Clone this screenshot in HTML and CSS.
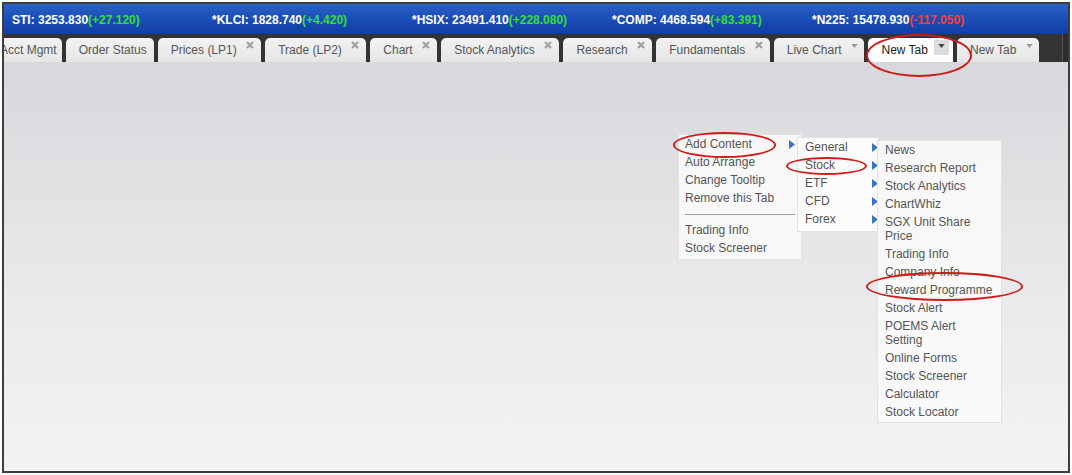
FILE: index.html
```html
<!DOCTYPE html>
<html>
<head>
<meta charset="utf-8">
<link rel="stylesheet" href="styles.css">
</head>
<body>
<div class="frame">
  <div class="ticker">
    <div class="tick">STI: 3253.830<span class="up">(+27.120)</span></div>
    <div class="tick">*KLCI: 1828.740<span class="up">(+4.420)</span></div>
    <div class="tick">*HSIX: 23491.410<span class="up">(+228.080)</span></div>
    <div class="tick">*COMP: 4468.594<span class="up">(+83.391)</span></div>
    <div class="tick">*N225: 15478.930<span class="down">(-117.050)</span></div>
  </div>
  <div class="tabbar">
    <div class="tabs">
      <div class="tab first">Acct Mgmt</div>
      <div class="tab">Order Status</div>
      <div class="tab">Prices (LP1)<svg class="x" viewBox="0 0 8 8"><path d="M1 1L7 7M7 1L1 7"/></svg></div>
      <div class="tab">Trade (LP2)<svg class="x" viewBox="0 0 8 8"><path d="M1 1L7 7M7 1L1 7"/></svg></div>
      <div class="tab">Chart<svg class="x" viewBox="0 0 8 8"><path d="M1 1L7 7M7 1L1 7"/></svg></div>
      <div class="tab">Stock Analytics<svg class="x" viewBox="0 0 8 8"><path d="M1 1L7 7M7 1L1 7"/></svg></div>
      <div class="tab">Research<svg class="x" viewBox="0 0 8 8"><path d="M1 1L7 7M7 1L1 7"/></svg></div>
      <div class="tab">Fundamentals<svg class="x" viewBox="0 0 8 8"><path d="M1 1L7 7M7 1L1 7"/></svg></div>
      <div class="tab drop">Live Chart<svg class="dd" viewBox="0 0 8 5"><path d="M0 0H8L4 5Z"/></svg></div>
      <div class="tab active">New Tab<span class="ddbtn"><svg class="dd" viewBox="0 0 8 5"><path d="M0 0H8L4 5Z"/></svg></span></div>
      <div class="tab drop">New Tab<svg class="dd" viewBox="0 0 8 5"><path d="M0 0H8L4 5Z"/></svg></div>
    </div>
    <div class="tabend"></div>
  </div>
  <div class="content">
    <div class="menu m1">
      <div class="item">Add Content<svg class="arr" viewBox="0 0 6 9"><path d="M0 0L6 4.5L0 9Z"/></svg></div>
      <div class="item">Auto Arrange</div>
      <div class="item">Change Tooltip</div>
      <div class="item">Remove this Tab</div>
      <div class="sep"></div>
      <div class="item">Trading Info</div>
      <div class="item">Stock Screener</div>
    </div>
    <div class="menu m2">
      <div class="item">General<svg class="arr" viewBox="0 0 6 9"><path d="M0 0L6 4.5L0 9Z"/></svg></div>
      <div class="item">Stock<svg class="arr" viewBox="0 0 6 9"><path d="M0 0L6 4.5L0 9Z"/></svg></div>
      <div class="item">ETF<svg class="arr" viewBox="0 0 6 9"><path d="M0 0L6 4.5L0 9Z"/></svg></div>
      <div class="item">CFD<svg class="arr" viewBox="0 0 6 9"><path d="M0 0L6 4.5L0 9Z"/></svg></div>
      <div class="item">Forex<svg class="arr" viewBox="0 0 6 9"><path d="M0 0L6 4.5L0 9Z"/></svg></div>
    </div>
    <div class="menu m3">
      <div class="item">News</div>
      <div class="item">Research Report</div>
      <div class="item">Stock Analytics</div>
      <div class="item">ChartWhiz</div>
      <div class="item">SGX Unit Share Price</div>
      <div class="item">Trading Info</div>
      <div class="item">Company Info</div>
      <div class="item">Reward Programme</div>
      <div class="item">Stock Alert</div>
      <div class="item">POEMS Alert Setting</div>
      <div class="item">Online Forms</div>
      <div class="item">Stock Screener</div>
      <div class="item">Calculator</div>
      <div class="item">Stock Locator</div>
    </div>
  </div>
  <div class="ring r-newtab"></div>
  <div class="ring r-add"></div>
  <div class="ring r-stock"></div>
  <div class="ring r-reward"></div>
</div>
</body>
</html>
```

FILE: styles.css
```css
html, body {
  margin: 0;
  padding: 0;
  background: #ffffff;
}
body {
  padding: 2px;
  font-family: "Liberation Sans", Arial, sans-serif;
  font-size: 12px;
}
.frame {
  position: relative;
  width: 1064px;
  height: 467px;
  border: 2px solid #3e3e3e;
  display: flex;
  flex-direction: column;
  overflow: hidden;
}
.ticker {
  height: 30px;
  flex: none;
  display: flex;
  align-items: center;
  padding-left: 8px;
  padding-top: 1px;
  box-sizing: border-box;
  background: linear-gradient(#2c61c6, #1a4db5 50%, #0f3ea6);
  color: #ffffff;
  font-weight: bold;
}
.tick {
  width: 200px;
  white-space: nowrap;
}
.up { color: #33e033; }
.down { color: #ff3a3a; }
.tabbar {
  height: 28px;
  flex: none;
  display: flex;
  background: #333333;
}
.tabs {
  flex: 1;
  display: flex;
  gap: 4px;
  padding-top: 4px;
  overflow: hidden;
}
.tabend {
  width: 5px;
  border-left: 1px solid #555;
  background: #2c2c2c;
}
.tab {
  flex: none;
  height: 24px;
  box-sizing: border-box;
  display: flex;
  align-items: center;
  padding: 0 7px 0 13px;
  border-radius: 5px 5px 0 0;
  background: linear-gradient(#f2f2f2, #e6e6e6);
  color: #555555;
  white-space: nowrap;
}
.tab.first {
  margin-left: -17px;
  padding-right: 5px;
}
.tab.drop {
  padding-right: 6px;
}
.tab.active {
  background: #ffffff;
  color: #222222;
  padding-right: 4px;
}
.x {
  width: 8px;
  height: 8px;
  margin-left: 9.5px;
  align-self: flex-start;
  margin-top: 3px;
  stroke: #a0a0a0;
  stroke-width: 2.2;
  fill: none;
}
.dd {
  width: 7px;
  height: 4px;
  margin-left: 10px;
  align-self: flex-start;
  margin-top: 6px;
  fill: #999999;
}
.ddbtn {
  width: 15px;
  height: 15px;
  margin-left: 6px;
  align-self: flex-start;
  margin-top: 2px;
  background: #dcdcdc;
  display: flex;
  justify-content: center;
}
.ddbtn .dd {
  margin: 4px 0 0 0;
  fill: #444444;
}
.content {
  flex: 1;
  position: relative;
  background: linear-gradient(#d7d8db, #e9e9eb 55%, #f3f3f5);
}
.menu {
  position: absolute;
  box-sizing: border-box;
  background: rgba(250, 250, 250, 0.88);
  border: 1px solid #e2e2e2;
  color: #555555;
}
.item {
  display: flex;
  align-items: center;
  line-height: 14px;
  padding: 2px 0;
}
.arr {
  width: 6px;
  height: 9px;
  margin-left: auto;
  fill: #3a72c6;
  flex: none;
}
.m1 {
  left: 674px;
  top: 72px;
  width: 124px;
  padding: 0 6px 2px 6px;
}
.sep {
  height: 14px;
  display: flex;
  align-items: center;
}
.sep::before {
  content: "";
  flex: 1;
  height: 1px;
  background: #9a9a9a;
}
.m2 {
  left: 793px;
  top: 75px;
  width: 82px;
  padding: 0 0 3px 7px;
  background: rgba(252, 252, 252, 0.95);
  z-index: 1;
}
.m3 {
  left: 873px;
  top: 78px;
  width: 125px;
  padding: 0 7px 1px 7px;
  z-index: 2;
}
.ring {
  position: absolute;
  box-sizing: border-box;
  border: 2px solid #d11a1a;
  border-radius: 50%;
  z-index: 5;
}
.r-newtab { left: 862px; top: 30px; width: 106px; height: 43px; }
.r-add { left: 669px; top: 128px; width: 103px; height: 26px; }
.r-stock { left: 782px; top: 153px; width: 81px; height: 18px; }
.r-reward { left: 862px; top: 268px; width: 157px; height: 29px; }
```
